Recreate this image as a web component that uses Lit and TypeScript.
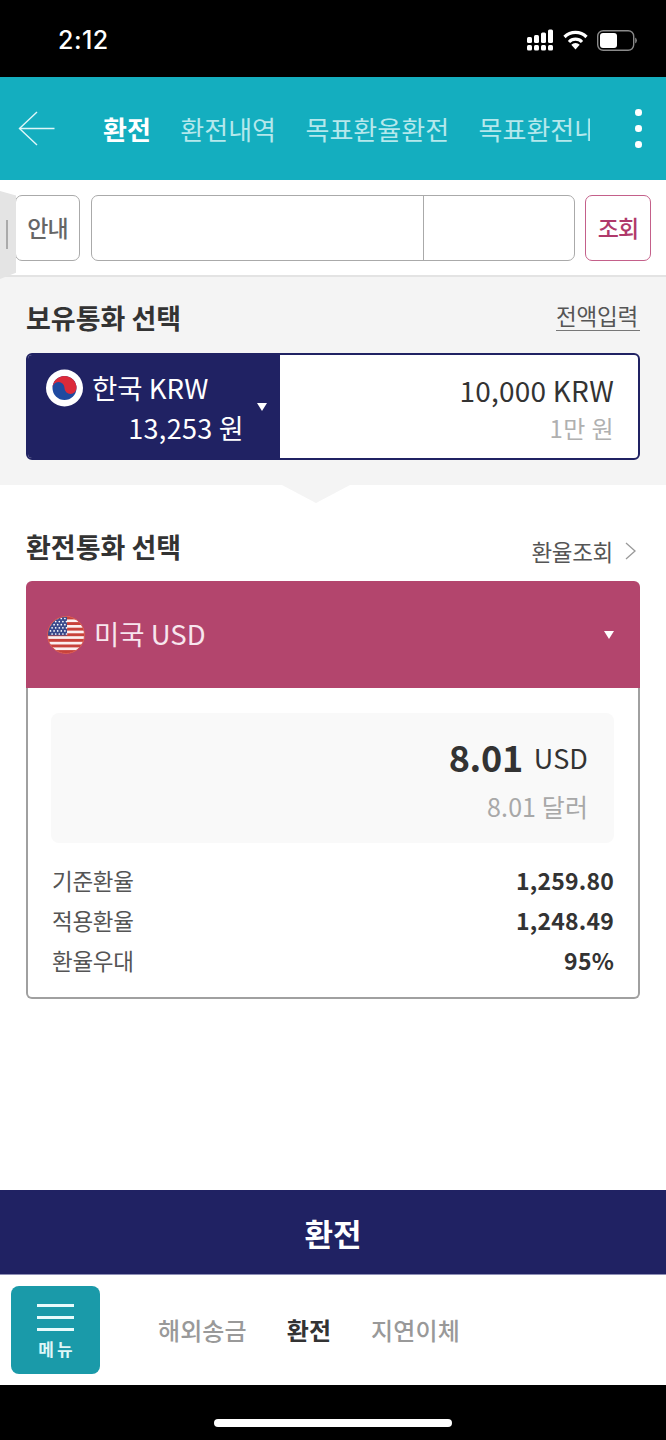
import { LitElement, html, css, svg } from "lit";
import { customElement } from "lit/decorators.js";

@customElement("app-root")
export class AppRoot extends LitElement {
  static styles = css`
    :host { display: block; width: 666px; height: 1440px; font-family: "Noto Sans CJK KR", "Noto Sans", sans-serif; background: #fff; overflow: hidden; position: relative; }
    .page { display: flex; flex-direction: column; height: 1440px; }
    .status { height: 77px; background: #000; color: #fff; display: flex; align-items: center; justify-content: space-between; padding: 0 29px 0 58px; box-sizing: border-box; flex: none; }
    .time { font-family: "Inter", sans-serif; font-size: 25px; font-weight: 500; line-height: 28px; margin-top: 3px; letter-spacing: 0.5px; }
    .sicons { display: flex; align-items: center; gap: 9px; margin-top: 3px; }
    .sicons svg { display: block; }
    .header { height: 103px; background: #14aebf; flex: none; display: flex; align-items: center; position: relative; box-sizing: border-box; }
    .back { margin-left: 18px; flex: none; display: block; }
    .tabs { display: flex; width: 487px; margin-left: 48px; overflow: hidden; gap: 29.5px; white-space: nowrap; font-size: 26px; line-height: 44px; color: #b5e8ec; position: relative; margin-top: 1px; }
    .tabs b { color: #fff; font-weight: 700; flex: none; }
    .tabs span { flex: none; }
    .dots { margin-left: 45px; display: flex; flex-direction: column; gap: 9.5px; }
    .dots i { width: 6.5px; height: 6.5px; border-radius: 50%; background: #fff; display: block; }
    .search { height: 97px; flex: none; box-sizing: border-box; border-bottom: 2px solid #e3e3e3; padding: 15px 15px 0 15px; display: flex; align-items: flex-start; position: relative; z-index: 2; }
    .btn { width: 65px; height: 66px; box-sizing: border-box; border: 1px solid #aaa; border-radius: 7px; display: flex; align-items: center; justify-content: center; font-size: 23px; color: #666; font-weight: 500; letter-spacing: -0.8px; background: #fff; flex: none; padding-bottom: 2px; }
    .btn.r { border-color: #c4608a; color: #b0396b; width: 66px; margin-left: 10px; }
    .field { flex: none; width: 484px; height: 66px; margin-left: 11px; box-sizing: border-box; border: 1px solid #aaa; border-radius: 7px; display: grid; grid-template-columns: 331px 1fr; background: #fff; }
    .field div + div { border-left: 1px solid #aaa; }
    .handle { position: absolute; left: 0; top: 11px; width: 16px; height: 88px; background: #e4e4e4; clip-path: polygon(0 0, 100% 5%, 100% 93%, 0 100%); display: flex; }
    .handle i { width: 2px; height: 29px; background: #aaa; margin: 29px 0 0 6px; display: block; }
    .hold { height: 208px; background: #f4f4f4; flex: none; box-sizing: border-box; padding: 20px 26px 0; position: relative; }
    .sh { display: flex; justify-content: space-between; align-items: center; height: 42px; }
    .sh h2 { margin: 0; font-size: 27px; font-weight: 700; color: #333; line-height: 40px; }
    .all { font-size: 22.5px; color: #555; border-bottom: 1px solid #777; line-height: 30px; letter-spacing: -0.2px; padding: 0 2px 0 0; margin-top: -5px; }
    .hbox { margin-top: 14px; height: 107px; border: 2px solid #202263; border-radius: 6px; box-sizing: border-box; display: flex; background: #fff; overflow: hidden; }
    .hl { width: 252px; background: #202263; color: #fff; position: relative; box-sizing: border-box; padding: 14px 0 0 18px; flex: none; }
    .row { display: flex; align-items: center; gap: 9px; font-size: 27.5px; line-height: 36px; }
    .row span { margin-top: -3px; }
    .amt { position: absolute; right: 36px; top: 54px; font-size: 27px; line-height: 38px; letter-spacing: 0.3px; }
    .tri { position: absolute; width: 0; height: 0; border-left: 5.5px solid transparent; border-right: 5.5px solid transparent; border-top: 8px solid #fff; }
    .hl .tri { right: 13px; top: 48px; }
    .hr { flex: 1; text-align: right; padding: 13px 24px 0 0; }
    .big { font-size: 28px; line-height: 44px; color: #333; letter-spacing: 0.2px; }
    .sub { font-size: 24px; line-height: 34px; color: #b0b0b0; margin-top: -1px; letter-spacing: 0.4px; }
    .notch { position: absolute; left: 282px; bottom: -18px; width: 0; height: 0; border-left: 34px solid transparent; border-right: 34px solid transparent; border-top: 18px solid #f4f4f4; }
    .ex { flex: 1; padding: 41px 26px 0; box-sizing: border-box; }
    .rate { font-size: 22.5px; color: #555; display: flex; align-items: center; gap: 12px; letter-spacing: -0.3px; line-height: 30px; margin-top: 7px; padding-right: 4px; }
    .card { margin-top: 13px; height: 418px; box-sizing: border-box; }
    .chead { height: 107px; background: #b3456d; color: #fff; display: flex; align-items: center; padding: 0 26px 0 21px; gap: 9px; font-size: 27.5px; position: relative; border-radius: 6px 6px 0 0; box-sizing: border-box; }
    .chead span { color: #f7e6ee; margin-top: -3px; }
    .chead .tri { right: 26px; top: 50px; }
    .cbody { height: 311px; box-sizing: border-box; border: 2px solid #a0a0a0; border-top: 0; border-radius: 0 0 6px 6px; padding: 25px 24px 0 23px; }
    .panel { height: 130px; background: #f9f9f9; border-radius: 8px; box-sizing: border-box; padding: 12px 26px 0; text-align: right; }
    .pv { display: flex; justify-content: flex-end; align-items: center; gap: 11px; color: #333; line-height: 58px; }
    .pv b { font-size: 36px; font-weight: 700; letter-spacing: -0.3px; }
    .pv span { font-size: 27px; letter-spacing: 0.1px; margin-top: 4px; }
    .psub { font-size: 25px; color: #a8a8a8; line-height: 34px; margin-top: 2px; letter-spacing: 0.1px; }
    .info { margin-top: 17px; padding-left: 1px; display: flex; flex-direction: column; }
    .ir { display: flex; justify-content: space-between; height: 40px; align-items: center; font-size: 22.5px; color: #555; letter-spacing: -0.3px; }
    .ir b { color: #333; font-size: 23px; font-weight: 700; letter-spacing: 0.2px; }
    .cta { height: 85px; flex: none; background: #202263; color: #fff; display: flex; align-items: center; justify-content: center; font-size: 31px; font-weight: 700; border-bottom: 1px solid #8d8eb5; box-sizing: border-box; }
    .bnav { height: 110px; flex: none; display: flex; align-items: center; padding-left: 11px; box-sizing: border-box; gap: 58px; }
    .menu { width: 89px; height: 88px; background: #1a9aa9; border-radius: 8px; color: #dff6f7; display: flex; flex-direction: column; align-items: center; padding-top: 18px; box-sizing: border-box; }
    .menu i { display: block; width: 37px; height: 3px; background: #e8fbfc; margin-bottom: 9px; }
    .menu span { font-size: 17px; font-weight: 700; line-height: 20px; margin-top: -1px; letter-spacing: 3px; padding-left: 3px; }
    .nl { display: flex; gap: 40px; font-size: 24px; color: #999; font-weight: 500; letter-spacing: 0.1px; margin-bottom: 2px; }
    .nl b { color: #333; font-weight: 700; }
    .home { height: 55px; flex: none; background: #000; display: flex; justify-content: center; padding-top: 34px; box-sizing: border-box; }
    .home i { display: block; width: 238px; height: 8px; border-radius: 4px; background: #fff; }
  `;

  private usFlag() {
    const stripes = [];
    for (let i = 0; i < 7; i++) stripes.push(svg`<rect x="0" y=${i * 5.6 + 0.5} width="40" height="2.9" fill="#c8413a"/>`);
    const stars = [];
    for (let r = 0; r < 6; r++) for (let c = 0; c < 5; c++) stars.push(svg`<circle cx=${3.5 + c * 3.6 + (r % 2) * 1.6} cy=${2.5 + r * 3.1} r="0.85" fill="#fff"/>`);
    return html`<svg width="38" height="38" viewBox="0 0 38 38" style="flex:none">
      <defs><clipPath id="u"><circle cx="19" cy="19" r="18.5"/></clipPath></defs>
      <g clip-path="url(#u)"><rect width="38" height="38" fill="#fbeff0"/>${stripes}<rect width="20" height="19.5" fill="#3b4a8c"/>${stars}</g>
      <circle cx="19" cy="19" r="18.5" fill="none" stroke="#d8574f" stroke-width="1"/></svg>`;
  }

  render() {
    return html`<div class="page">
      <div class="status">
        <div class="time">2:12</div>
        <div class="sicons">
          <svg width="27" height="22" viewBox="0 0 27 22" fill="#fff">
            <rect x="0" y="8" width="5" height="6" rx="1.5"/><rect x="0" y="16" width="5" height="5.5" rx="1.5"/>
            <rect x="7" y="6" width="5" height="8" rx="1.5"/><rect x="7" y="16" width="5" height="5.5" rx="1.5"/>
            <rect x="14" y="3.5" width="5" height="10.5" rx="1.5"/><rect x="14" y="16" width="5" height="5.5" rx="1.5"/>
            <rect x="21" y="0.5" width="5" height="13.5" rx="1.5"/><rect x="21" y="16" width="5" height="5.5" rx="1.5"/>
          </svg>
          <svg width="25" height="20" viewBox="0 0 25 20" fill="none" stroke="#fff" stroke-width="3.2">
            <path d="M1.5 7 A15.5 15.5 0 0 1 23.5 7"/><path d="M6 12 A9 9 0 0 1 19 12"/><path d="M12.5 19.5 L8.3 14.8 A6 6 0 0 1 16.7 14.8 Z" fill="#fff" stroke="none"/>
          </svg>
          <svg width="40" height="21" viewBox="0 0 40 21">
            <rect x="0.7" y="0.7" width="36" height="19.6" rx="5.5" fill="none" stroke="#8a8a8a" stroke-width="1.4"/>
            <rect x="3" y="3" width="17" height="15" rx="3" fill="#fff"/>
            <path d="M38.2 7.5 a3.5 3.5 0 0 1 0 6 z" fill="#8a8a8a"/>
          </svg>
        </div>
      </div>

      <div class="header">
        <svg class="back" width="37" height="35" viewBox="0 0 37 35" fill="none" stroke="#dff6f8" stroke-width="1.4">
          <path d="M36.5 17.5 H1.5"/><path d="M19 1 L1.5 17.5 L19 34"/>
        </svg>
        <div class="tabs"><b>환전</b><span>환전내역</span><span>목표환율환전</span><span>목표환전내역</span></div>
        <div class="dots"><i></i><i></i><i></i></div>
      </div>

      <div class="search">
        <div class="btn">안내</div>
        <div class="field"><div></div><div></div></div>
        <div class="btn r">조회</div>
        <div class="handle"><i></i></div>
      </div>

      <div class="hold">
        <div class="sh"><h2>보유통화 선택</h2><span class="all">전액입력</span></div>
        <div class="hbox">
          <div class="hl">
            <div class="row">
              <svg width="37" height="38" viewBox="0 0 37 38" style="flex:none">
                <circle cx="18.5" cy="19" r="18.5" fill="#fff"/>
                <circle cx="18.5" cy="19" r="12" fill="#1f4aa0"/>
                <path d="M6.5 19 A12 12 0 0 1 30.5 19 A6 6 0 0 1 18.5 19 A6 6 0 0 0 6.5 19 Z" fill="#dc2a3a"/>
              </svg>
              <span>한국 KRW</span>
            </div>
            <div class="amt">13,253 원</div>
            <div class="tri"></div>
          </div>
          <div class="hr">
            <div class="big">10,000 KRW</div>
            <div class="sub">1만 원</div>
          </div>
        </div>
        <div class="notch"></div>
      </div>

      <div class="ex">
        <div class="sh"><h2>환전통화 선택</h2>
          <span class="rate">환율조회
            <svg width="11" height="18" viewBox="0 0 11 18" fill="none" stroke="#999" stroke-width="1.3"><path d="M1 1 L10 9 L1 17"/></svg>
          </span>
        </div>
        <div class="card">
          <div class="chead">${this.usFlag()}<span>미국 USD</span><div class="tri"></div></div>
          <div class="cbody">
            <div class="panel">
              <div class="pv"><b>8.01</b><span>USD</span></div>
              <div class="psub">8.01 달러</div>
            </div>
            <div class="info">
              <div class="ir"><span>기준환율</span><b>1,259.80</b></div>
              <div class="ir"><span>적용환율</span><b>1,248.49</b></div>
              <div class="ir"><span>환율우대</span><b>95%</b></div>
            </div>
          </div>
        </div>
      </div>

      <div class="cta">환전</div>
      <div class="bnav">
        <div class="menu"><i></i><i></i><i></i><span>메뉴</span></div>
        <div class="nl"><span>해외송금</span><b>환전</b><span>지연이체</span></div>
      </div>
      <div class="home"><i></i></div>
    </div>`;
  }
}
